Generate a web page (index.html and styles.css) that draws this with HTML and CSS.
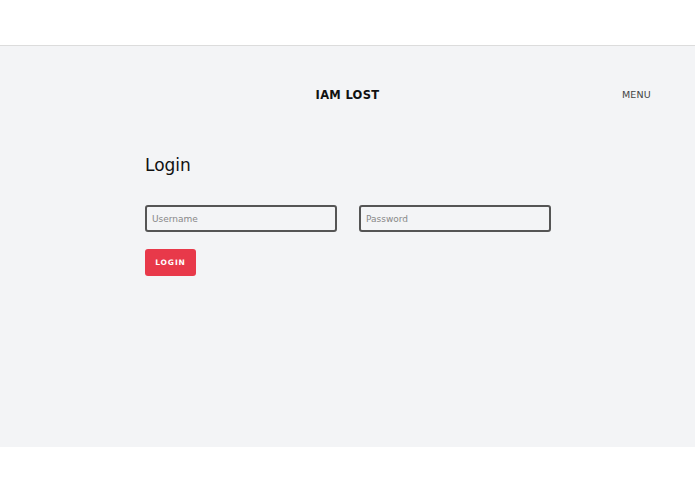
FILE: index.html
```html
<!DOCTYPE html>
<html lang="en">
<head>
<meta charset="utf-8">
<title>IAM LOST - Login</title>
<link rel="stylesheet" href="styles.css">
</head>
<body>
<div class="topband"></div>
<main class="page">
  <header class="header">
    <div class="brand">IAM LOST</div>
    <div class="menu">MENU</div>
  </header>
  <section class="content">
    <h1 class="title">Login</h1>
    <form class="form">
      <div class="fields">
        <input class="field" type="text" placeholder="Username">
        <input class="field" type="password" placeholder="Password">
      </div>
      <button class="btn" type="button">LOGIN</button>
    </form>
  </section>
</main>
<div class="bottomband"></div>
</body>
</html>
```
FILE: styles.css
```css
* { box-sizing: border-box; }
html, body { margin: 0; padding: 0; background: #fff; }
body { font-family: "DejaVu Sans", "Open Sans", sans-serif; color: #111; }
.topband { height: 46px; background: #fff; border-bottom: 1px solid #dcdcdc; }
.page { height: 401px; background: #f3f4f6; }
.header { position: relative; height: 96px; display: flex; align-items: center; justify-content: center; padding-top: 2px; }
.brand { font-weight: 700; font-size: 11.5px; letter-spacing: 0.3px; color: #111; }
.menu { position: absolute; right: 44px; top: 43px; font-size: 9.5px; letter-spacing: 0.2px; color: #444; }
.content { padding-left: 145px; }
.title { margin: 0; font-weight: 400; font-size: 17px; line-height: 22px; padding-top: 12px; color: #111; }
.form { margin-top: 29px; }
.fields { display: flex; gap: 22px; }
.field { width: 192px; height: 27px; border: 2px solid #555; border-radius: 3px; background: #f3f4f6; padding: 0 5px; font-family: inherit; font-size: 9px; color: #333; outline: none; }
.field::placeholder { color: #888; }
.btn { margin-top: 17px; width: 51px; height: 27px; border: none; border-radius: 3px; background: #e8394a; color: #fff; font-family: inherit; font-weight: 700; font-size: 7.5px; letter-spacing: 0.9px; padding: 0; }
```
